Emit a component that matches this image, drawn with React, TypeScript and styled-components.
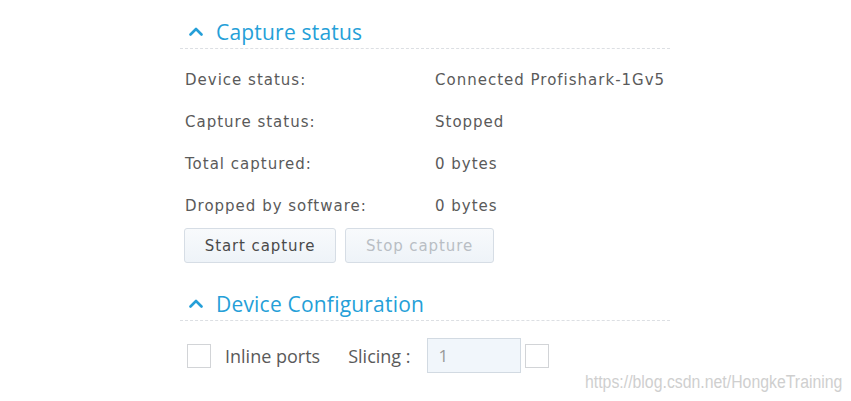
import styled, { createGlobalStyle } from 'styled-components'

const GlobalStyle = createGlobalStyle`
  html, body {
    margin: 0;
    padding: 0;
    background: #ffffff;
  }
  body {
    font-family: 'DejaVu Sans', Verdana, sans-serif;
  }
`

const Page = styled.div`
  position: relative;
  width: 851px;
  height: 401px;
  overflow: hidden;
  background: #ffffff;
`

const Panel = styled.div`
  width: 490px;
  margin-left: 180px;
  padding-top: 13px;
`

const SectionHeading = styled.div<{ $gap?: number }>`
  display: flex;
  align-items: center;
  gap: 13px;
  height: 36px;
  box-sizing: border-box;
  padding: 6px 0 4px 9px;
  margin-top: ${(p) => p.$gap ?? 0}px;
  border-bottom: 1px dashed #dcdfe3;
  font-family: 'Open Sans', 'DejaVu Sans', sans-serif;
  font-size: 21px;
  letter-spacing: 0.2px;
  line-height: 26px;
  color: #259fd8;
  svg {
    flex: none;
  }
`

const Rows = styled.div`
  padding-top: 10px;
`

const InfoRow = styled.div`
  display: grid;
  grid-template-columns: 250px 1fr;
  height: 42px;
  align-items: center;
  padding-left: 5px;
  font-size: 15px;
  letter-spacing: 1px;
  color: #5a5a5a;
  white-space: nowrap;
`

const Actions = styled.div`
  display: flex;
  gap: 9px;
  margin-top: 1px;
  padding-left: 4px;
`

const ActionButton = styled.button<{ $w: number }>`
  width: ${(p) => p.$w}px;
  height: 35px;
  border: 1px solid #d6dde5;
  border-radius: 3px;
  background: linear-gradient(#f8fafc, #eef3f8);
  font-family: 'DejaVu Sans', Verdana, sans-serif;
  font-size: 15px;
  letter-spacing: 0.9px;
  color: ${(p) => (p.disabled ? '#b9bec4' : '#4a4a4a')};
  padding: 0;
`

const ConfigRow = styled.div`
  display: flex;
  align-items: center;
  padding: 17px 0 0 7px;
  color: #555;
`

const Check = styled.span<{ $ml?: number }>`
  display: inline-block;
  width: 22px;
  height: 22px;
  border: 1px solid #d2d4d7;
  background: #fff;
  margin-left: ${(p) => p.$ml ?? 0}px;
`

const Label = styled.span<{ $ml: number }>`
  margin-left: ${(p) => p.$ml}px;
  font-family: 'Open Sans', 'DejaVu Sans', sans-serif;
  font-size: 18px;
  color: #5a5a5a;
`

const SliceInput = styled.div`
  width: 94px;
  height: 35px;
  box-sizing: border-box;
  margin-left: 16px;
  border: 1px solid #d2dae2;
  background: #f1f6fb;
  padding-left: 11px;
  line-height: 33px;
  font-family: 'Open Sans', 'DejaVu Sans', sans-serif;
  font-size: 17px;
  color: #9a9a9a;
`

const Watermark = styled.div`
  position: absolute;
  left: 585px;
  top: 372px;
  font-family: 'Liberation Sans', Arial, sans-serif;
  font-size: 18px;
  color: #cfcfcf;
  white-space: nowrap;
  transform: scaleX(0.88);
  transform-origin: left center;
`

const Chevron = () => (
  <svg width="14" height="9" viewBox="0 0 14 9">
    <polyline
      points="1.5,7.5 7,2 12.5,7.5"
      fill="none"
      stroke="#259fd8"
      strokeWidth="2.6"
      strokeLinecap="round"
      strokeLinejoin="round"
    />
  </svg>
)

const status = [
  ['Device status:', 'Connected Profishark-1Gv5'],
  ['Capture status:', 'Stopped'],
  ['Total captured:', '0 bytes'],
  ['Dropped by software:', '0 bytes'],
]

const App = () => {
  return (
    <Page>
      <GlobalStyle />
      <Panel>
        <SectionHeading>
          <Chevron />
          Capture status
        </SectionHeading>
        <Rows>
          {status.map(([label, value]) => (
            <InfoRow key={label}>
              <span>{label}</span>
              <span>{value}</span>
            </InfoRow>
          ))}
        </Rows>
        <Actions>
          <ActionButton $w={152}>Start capture</ActionButton>
          <ActionButton $w={149} disabled>
            Stop capture
          </ActionButton>
        </Actions>
        <SectionHeading $gap={22}>
          <Chevron />
          Device Configuration
        </SectionHeading>
        <ConfigRow>
          <Check />
          <Label $ml={14}>Inline ports</Label>
          <Label $ml={28}>Slicing :</Label>
          <SliceInput>1</SliceInput>
          <Check $ml={4} />
        </ConfigRow>
      </Panel>
      <Watermark>https://blog.csdn.net/HongkeTraining</Watermark>
    </Page>
  )
}

export default App
